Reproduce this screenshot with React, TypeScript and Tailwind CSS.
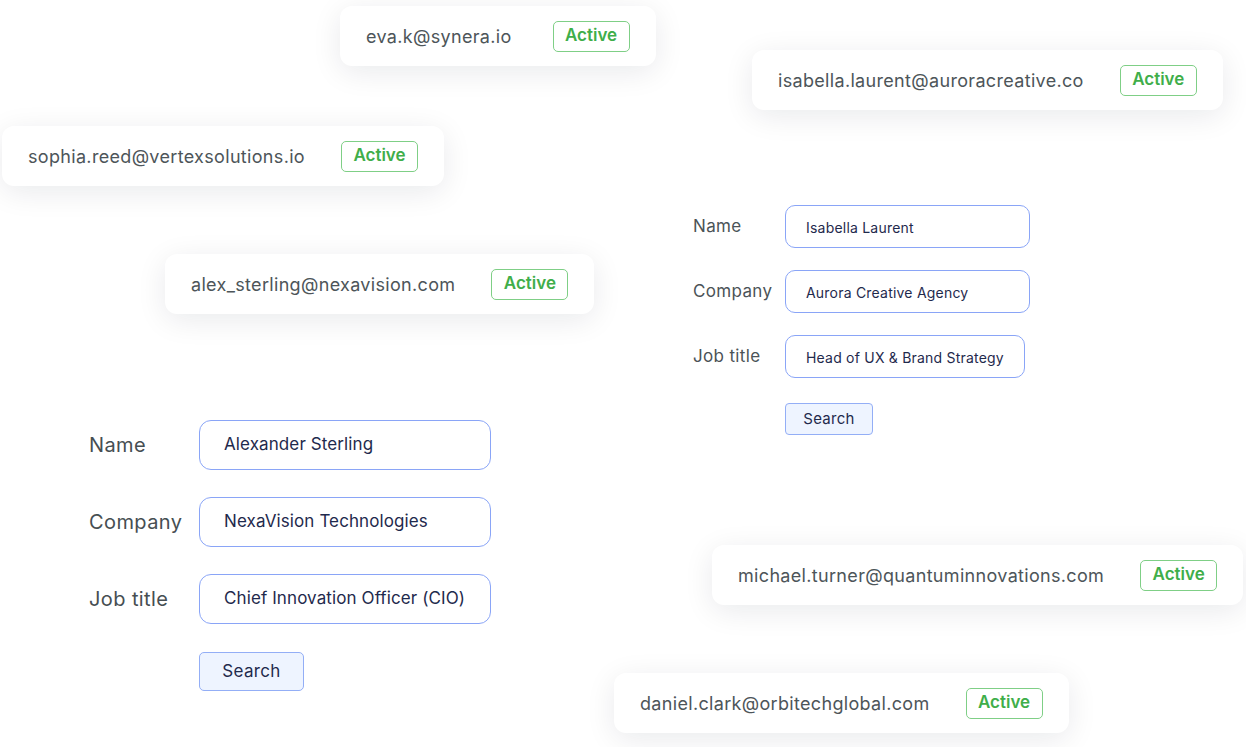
import React from "react";

type CardProps = { email: string; x: number; y: number; wide?: boolean };

const EmailCard = ({ email, x, y, wide }: CardProps) => (
  <div
    className={`absolute flex h-[60px] items-center rounded-[12px] bg-white px-[26px] shadow-[0_6px_30px_rgba(15,23,42,0.09)] ${wide ? "gap-[41px]" : "gap-9"}`}
    style={{ left: x, top: y }}
  >
    <span className="text-[18px] tracking-[0.018em] text-[#4d5559]">{email}</span>
    <span className="flex h-[31px] w-[77px] items-center justify-center rounded-[5px] border border-[#7fcf86] text-[17px] font-semibold text-[#3fae4a]">
      Active
    </span>
  </div>
);

const SmallForm = () => (
  <div className="absolute left-[693px] top-[205px] grid grid-cols-[92px_auto] items-center gap-y-[22px]">
    <span className="text-[17px] tracking-[0.02em] text-[#4b5357]">Name</span>
    <div className="flex h-[43px] w-[245px] items-center rounded-[10px] border border-[#8aa5f7] bg-white pl-[20px] pt-[1px] text-[14px] tracking-[0.015em] text-[#1f2a4d]">
      Isabella Laurent
    </div>
    <span className="text-[17px] tracking-[0.02em] text-[#4b5357]">Company</span>
    <div className="flex h-[43px] w-[245px] items-center rounded-[10px] border border-[#8aa5f7] bg-white pl-[20px] pt-[1px] text-[14px] tracking-[0.015em] text-[#1f2a4d]">
      Aurora Creative Agency
    </div>
    <span className="text-[17px] tracking-[0.02em] text-[#4b5357]">Job title</span>
    <div className="flex h-[43px] w-[240px] items-center rounded-[10px] border border-[#8aa5f7] bg-white pl-[20px] pt-[1px] text-[14px] tracking-[0.015em] text-[#1f2a4d]">
      Head of UX &amp; Brand Strategy
    </div>
    <span />
    <div className="mt-[3px] flex h-[32px] w-[88px] items-center justify-center rounded-[4px] border border-[#93aef6] bg-[#eef4ff] pt-[1px] text-[15px] tracking-[0.02em] text-[#1f2a4d]">
      Search
    </div>
  </div>
);

const LargeForm = () => (
  <div className="absolute left-[89px] top-[420px] grid grid-cols-[110px_auto] items-center gap-y-[27px]">
    <span className="text-[20px] tracking-[0.02em] text-[#464e52]">Name</span>
    <div className="flex h-[50px] w-[292px] items-center rounded-[12px] border border-[#8aa5f7] bg-white pl-[24px] text-[17px] tracking-[0.006em] text-[#1f2a4d]">
      Alexander Sterling
    </div>
    <span className="text-[20px] tracking-[0.02em] text-[#464e52]">Company</span>
    <div className="flex h-[50px] w-[292px] items-center rounded-[12px] border border-[#8aa5f7] bg-white pl-[24px] text-[17px] tracking-[0.006em] text-[#1f2a4d]">
      NexaVision Technologies
    </div>
    <span className="text-[20px] tracking-[0.02em] text-[#464e52]">Job title</span>
    <div className="flex h-[50px] w-[292px] items-center rounded-[12px] border border-[#8aa5f7] bg-white pl-[24px] text-[17px] tracking-[0.006em] text-[#1f2a4d]">
      Chief Innovation Officer (CIO)
    </div>
    <span />
    <div className="mt-[1px] flex h-[39px] w-[105px] items-center justify-center rounded-[5px] border border-[#93aef6] bg-[#eef4ff] text-[17px] tracking-[0.02em] text-[#1f2a4d]">
      Search
    </div>
  </div>
);

export default function App() {
  return (
    <div
      className="relative h-[747px] w-[1246px] overflow-hidden bg-white"
      style={{ fontFamily: "Inter, 'Noto Sans', sans-serif" }}
    >
      <EmailCard email="eva.k@synera.io" x={340} y={6} wide />
      <EmailCard email="isabella.laurent@auroracreative.co" x={752} y={50} />
      <EmailCard email="sophia.reed@vertexsolutions.io" x={2} y={126} />
      <EmailCard email="alex_sterling@nexavision.com" x={165} y={254} />
      <SmallForm />
      <LargeForm />
      <EmailCard email="michael.turner@quantuminnovations.com" x={712} y={545} />
      <EmailCard email="daniel.clark@orbitechglobal.com" x={614} y={673} />
    </div>
  );
}
